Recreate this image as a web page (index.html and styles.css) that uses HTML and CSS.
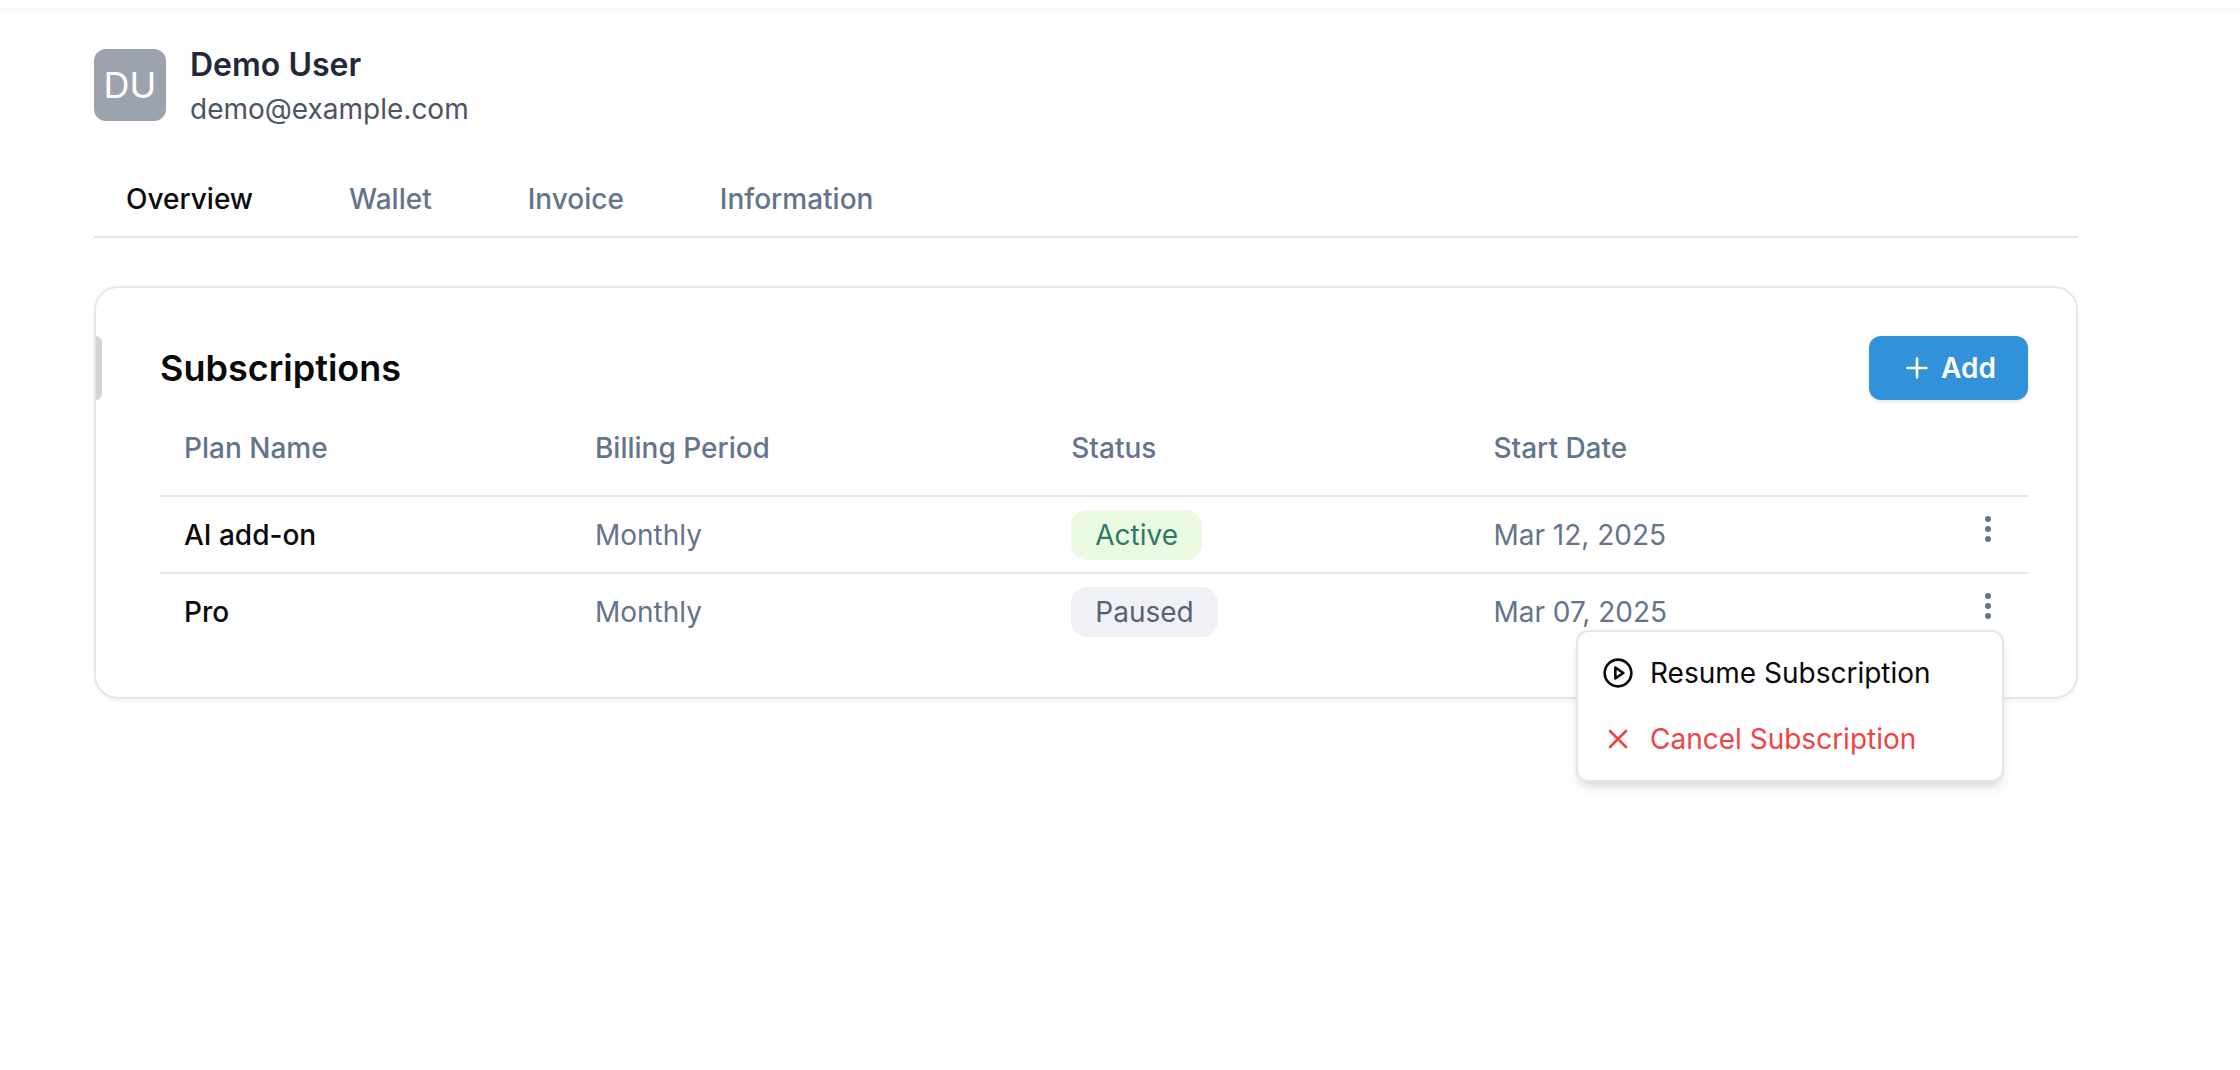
FILE: index.html
```html
<!DOCTYPE html>
<html lang="en">
<head>
    <meta charset="UTF-8">
    <meta name="viewport" content="width=device-width, initial-scale=1.0">
    <title>Demo User - Subscriptions</title>
    <link rel="stylesheet" href="styles.css">
</head>
<body>
    <div class="topbar"></div>
    <main class="page">
        <header class="profile">
            <div class="avatar">DU</div>
            <div>
                <h1 class="profile-name">Demo User</h1>
                <p class="profile-email">demo@example.com</p>
            </div>
        </header>

        <nav class="tabs">
            <a class="tab active" href="#overview">Overview</a>
            <a class="tab" href="#wallet">Wallet</a>
            <a class="tab" href="#invoice">Invoice</a>
            <a class="tab" href="#information">Information</a>
        </nav>

        <section class="card" id="overview">
            <div class="card-header">
                <h2 class="card-title">Subscriptions</h2>
                <button class="add-button" type="button">
                    <svg class="icon" viewBox="0 0 24 24"><path d="M5 12h14M12 5v14"/></svg>
                    Add
                </button>
            </div>
            <table class="table">
                <thead>
                    <tr>
                        <th class="col-plan">Plan Name</th>
                        <th class="col-period">Billing Period</th>
                        <th class="col-status">Status</th>
                        <th class="col-date">Start Date</th>
                        <th class="col-actions"></th>
                    </tr>
                </thead>
                <tbody>
                    <tr>
                        <td class="plan">AI add-on</td>
                        <td>Monthly</td>
                        <td><span class="badge badge-active">Active</span></td>
                        <td>Mar 12, 2025</td>
                        <td class="actions">
                            <div class="dropdown">
                                <button class="more-button" type="button" aria-label="AI add-on actions">
                                    <svg class="dots" viewBox="0 0 32 32"><circle cx="16" cy="6" r="3"/><circle cx="16" cy="16" r="3"/><circle cx="16" cy="26" r="3"/></svg>
                                </button>
                            </div>
                        </td>
                    </tr>
                    <tr>
                        <td class="plan">Pro</td>
                        <td>Monthly</td>
                        <td><span class="badge badge-paused">Paused</span></td>
                        <td>Mar 07, 2025</td>
                        <td class="actions">
                            <div class="dropdown">
                                <button class="more-button" type="button" aria-label="Pro actions" aria-expanded="true">
                                    <svg class="dots" viewBox="0 0 32 32"><circle cx="16" cy="6" r="3"/><circle cx="16" cy="16" r="3"/><circle cx="16" cy="26" r="3"/></svg>
                                </button>
                                <div class="menu">
                                    <button class="menu-item" type="button">
                                        <svg class="icon" viewBox="0 0 24 24"><circle cx="12" cy="12" r="10"/><path d="M10 8l6 4-6 4z"/></svg>
                                        Resume Subscription
                                    </button>
                                    <button class="menu-item danger" type="button">
                                        <svg class="icon" viewBox="0 0 24 24"><path d="M18 6L6 18M6 6l12 12"/></svg>
                                        Cancel Subscription
                                    </button>
                                </div>
                            </div>
                        </td>
                    </tr>
                </tbody>
            </table>
        </section>
    </main>
</body>
</html>
```

FILE: styles.css
```css
* {
    box-sizing: border-box;
}
body {
    min-height: 100vh;
    margin: 0;
    font-family: 'Inter', sans-serif;
    font-size: 28px;
    line-height: 40px;
    color: #0a0a0a;
    background-color: #fff;
}
h1, h2, p {
    margin: 0;
}
button {
    font: inherit;
    border: none;
    background: none;
    cursor: pointer;
}
.topbar {
    height: 8px;
    background-color: #fff;
    box-shadow: 0 2px 4px rgba(0, 0, 0, 0.05);
}
.page {
    min-height: calc(100vh - 8px);
    padding: 33px 162px 32px 94px;
}

/* user header */
.profile {
    display: flex;
    align-items: center;
    gap: 24px;
}
.avatar {
    display: flex;
    align-items: center;
    justify-content: center;
    width: 72px;
    height: 72px;
    border-radius: 12px;
    background-color: #9ca3af;
    color: #fff;
    font-size: 36px;
}
.profile-name {
    font-size: 32px;
    line-height: 48px;
    font-weight: 600;
    color: #1f2937;
}
.profile-email {
    color: #4b5563;
}

/* tabs */
.tabs {
    display: flex;
    gap: 32px;
    margin-top: 32px;
    border-bottom: 2px solid #e5e5e5;
}
.tab {
    padding: 18px 32px 17px;
    font-weight: 500;
    color: #64748b;
    text-decoration: none;
}
.tab.active {
    color: #0a0a0a;
}

/* subscriptions card */
.card {
    margin-top: 48px;
    padding: 48px 48px 48px 0;
    border: 2px solid #e5e7eb;
    border-radius: 24px;
    background-color: #fff;
    box-shadow: 0 2px 4px rgba(0, 0, 0, 0.05);
}
.card-header {
    display: flex;
    align-items: center;
    height: 64px;
}
.card-header::before {
    content: "";
    width: 6px;
    height: 64px;
    margin-right: 58px;
    border-radius: 0 6px 6px 0;
    background-color: #d4d4d8;
}
.card-title {
    flex: 1;
    font-size: 36px;
    font-weight: 600;
}
.add-button {
    display: flex;
    align-items: center;
    gap: 8px;
    height: 64px;
    padding: 0 32px;
    border-radius: 12px;
    background-color: #3192d9;
    color: #fff;
    font-weight: 600;
    box-shadow: 0 2px 4px rgba(0, 0, 0, 0.1);
}
.icon {
    flex: none;
    width: 32px;
    height: 32px;
    fill: none;
    stroke: currentColor;
    stroke-width: 2;
    stroke-linecap: round;
    stroke-linejoin: round;
}

/* table */
.table {
    width: calc(100% - 64px);
    margin-left: 64px;
    border-collapse: separate;
    border-spacing: 0;
    table-layout: fixed;
    color: #64748b;
}
.table th {
    height: 97px;
    padding: 0 24px;
    border-bottom: 2px solid #e2e8f0;
    font-weight: 500;
    text-align: left;
}
.table td {
    height: 75px;
    padding: 0 24px;
}
.table tr:not(:last-child) td {
    height: 77px;
    border-bottom: 2px solid #e2e8f0;
}
.col-plan {
    width: 22%;
}
.col-period {
    width: 25.5%;
}
.col-status {
    width: 22.6%;
}
.col-date {
    width: 15%;
}
.table .plan {
    font-weight: 500;
    color: #0a0a0a;
}
.badge {
    display: inline-block;
    padding: 5px 24px;
    border-radius: 16px;
    vertical-align: middle;
}
.badge-active {
    background-color: #eafbe2;
    color: #2f7a63;
}
.badge-paused {
    background-color: #eff1f6;
    color: #56636f;
}

/* row menu */
.dropdown {
    position: relative;
    width: 32px;
    margin-left: auto;
    padding-bottom: 12px;
}
.more-button {
    display: block;
    width: 32px;
    height: 32px;
    padding: 0;
    color: #64748b;
}
.dots {
    display: block;
    width: 32px;
    height: 32px;
    fill: currentColor;
}
.menu {
    position: absolute;
    top: 40px;
    right: 0;
    width: 428px;
    padding: 8px;
    border: 2px solid #e5e5e5;
    border-radius: 12px;
    background-color: #fff;
    box-shadow: 0 8px 12px -2px rgba(0, 0, 0, 0.1), 0 4px 8px -4px rgba(0, 0, 0, 0.1);
}
.menu-item {
    display: flex;
    align-items: center;
    gap: 16px;
    width: 100%;
    height: 66px;
    padding: 0 16px;
    color: #0a0a0a;
}
.menu-item.danger {
    color: #ef4444;
}
```
